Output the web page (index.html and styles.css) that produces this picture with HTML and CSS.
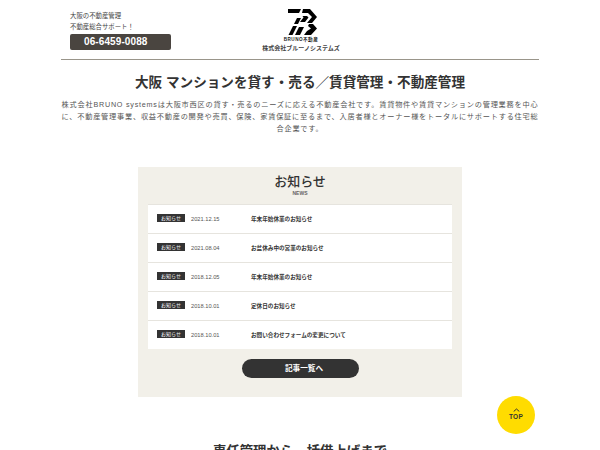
FILE: index.html
```html
<!DOCTYPE html>
<html lang="ja">
<head>
    <meta charset="UTF-8">
    <meta name="viewport" content="width=device-width, initial-scale=1.0">
    <title>株式会社ブルーノシステムズ</title>
    <link rel="stylesheet" href="styles.css">
</head>
<body>
    <header class="header">
        <div class="header-tel">
            <p class="header-lead">大阪の不動産管理<br>不動産総合サポート！</p>
            <a class="tel-box" href="#">06-6459-0088</a>
        </div>
        <a class="logo" href="#">
            <svg class="logo-mark" width="30" height="26" viewBox="0 0 30 26">
                <path d="M1 0H14L12 4H1Z"/>
                <path d="M10 9H14L11 15H7Z"/>
                <path d="M6 17H10L5.500 26H1.500Z"/>
                <path d="M16 0H23L30 8L25 14H20L25 8L21 4H15Z"/>
                <path d="M15.500 7H20L21.500 8.500L18 13H13L16.500 8.500Z"/>
                <path d="M22 15H26L30 19.500L24 26H17L20 22L24 19.500L21 17Z"/>
                <path d="M12 18H17L13 26H8Z"/>
            </svg>
            <span class="logo-brand">BRUNO不動産</span>
            <span class="logo-name">株式会社ブルーノシステムズ</span>
        </a>
    </header>

    <section class="intro">
        <h1 class="intro-title">大阪 マンションを貸す・売る／賃貸管理・不動産管理</h1>
        <p class="intro-text">株式会社BRUNO systemsは大阪市西区の貸す・売るのニーズに応える不動産会社です。賃貸物件や賃貸マンションの管理業務を中心に、不動産管理事業、収益不動産の開発や売買、保険、家賃保証に至るまで、入居者様とオーナー様をトータルにサポートする住宅総合企業です。</p>
    </section>

    <section class="news">
        <h2 class="news-title">お知らせ</h2>
        <p class="news-sub">NEWS</p>
        <ul class="news-list">
            <li class="news-item"><span class="news-tag">お知らせ</span><span class="news-date">2021.12.15</span><a class="news-link" href="#">年末年始休業のお知らせ</a></li>
            <li class="news-item"><span class="news-tag">お知らせ</span><span class="news-date">2021.08.04</span><a class="news-link" href="#">お盆休み中の営業のお知らせ</a></li>
            <li class="news-item"><span class="news-tag">お知らせ</span><span class="news-date">2018.12.05</span><a class="news-link" href="#">年末年始休業のお知らせ</a></li>
            <li class="news-item"><span class="news-tag">お知らせ</span><span class="news-date">2018.10.01</span><a class="news-link" href="#">定休日のお知らせ</a></li>
            <li class="news-item"><span class="news-tag">お知らせ</span><span class="news-date">2018.10.01</span><a class="news-link" href="#">お問い合わせフォームの変更について</a></li>
        </ul>
        <a class="news-more" href="#">記事一覧へ</a>
    </section>

    <section class="service">
        <h2 class="service-title">専任管理から一括借上げまで</h2>
    </section>

    <a class="page-top" href="#">
        <svg class="page-top-arrow" width="7" height="4" viewBox="0 0 7 4"><path d="M.7 3.5L3.5 1l2.8 2.5" fill="none" stroke="#333" stroke-width="1"/></svg>
        <span>TOP</span>
    </a>
</body>
</html>
```

FILE: styles.css
```css
* {
    margin: 0;
    padding: 0;
    box-sizing: border-box;
}

body {
    background: #fff;
    color: #333;
    font-family: "Liberation Sans", "Noto Sans CJK JP", sans-serif;
}

a {
    color: inherit;
    text-decoration: none;
}

ul {
    list-style: none;
}

.header {
    width: 478px;
    height: 60px;
    margin: 0 auto;
    padding: 11px 9px 0;
    border-bottom: 1px solid #99958a;
    display: grid;
    grid-template-columns: 1fr auto 1fr;
}

.header-lead {
    font-size: 6.4px;
    line-height: 10.5px;
    color: #444;
}

.tel-box {
    display: block;
    width: 101px;
    height: 16px;
    margin-top: 2px;
    padding-left: 14px;
    background: #4a4540;
    border-radius: 2px;
    color: #fff;
    font-size: 10px;
    font-weight: bold;
    line-height: 16px;
    letter-spacing: 0.1px;
}

.logo {
    grid-column: 2;
    display: flex;
    flex-direction: column;
    align-items: center;
    margin-top: -2px;
    transform: translateX(1px);
}

.logo-mark {
    display: block;
    margin-left: 2px;
}

.logo-brand {
    margin-top: 2px;
    font-size: 4.6px;
    line-height: 5px;
    font-weight: bold;
    letter-spacing: 0.5px;
    color: #222;
}

.logo-name {
    margin-top: 2px;
    font-size: 6px;
    line-height: 9px;
    font-weight: bold;
    color: #444;
}

.intro {
    width: 478px;
    margin: 0 auto;
    padding-top: 13px;
    text-align: center;
}

.intro-title {
    font-size: 13.6px;
    line-height: 20px;
    font-weight: bold;
    color: #333;
}

.intro-text {
    margin-top: 6px;
    font-size: 7.2px;
    line-height: 12px;
    letter-spacing: 0.77px;
    color: #555;
}

.news {
    width: 324px;
    height: 230px;
    margin: 32px auto 0;
    padding-top: 6px;
    background: #f2f0e9;
    text-align: center;
}

.news-title {
    font-size: 13px;
    line-height: 17px;
    font-weight: 500;
    color: #333;
}

.news-sub {
    font-size: 5px;
    line-height: 6px;
    font-weight: bold;
    color: #666;
}

.news-list {
    margin: 8px 10px 0;
    background: #fff;
    text-align: left;
}

.news-item {
    height: 29px;
    padding-left: 9px;
    border-top: 1px solid #e6e4de;
    display: flex;
    align-items: center;
}

.news-tag {
    width: 28px;
    height: 8px;
    margin-top: -2px;
    background: #333;
    color: #fff;
    font-size: 5px;
    line-height: 8px;
    text-align: center;
}

.news-date {
    width: 60px;
    margin-top: -1px;
    margin-left: 6px;
    font-size: 5.7px;
    color: #555;
}

.news-link {
    margin-top: -1px;
    font-size: 5.6px;
    font-weight: bold;
    color: #333;
}

.news-more {
    display: block;
    width: 117px;
    height: 19px;
    margin: 10px auto 0;
    padding-left: 8px;
    background: #333;
    border-radius: 10px;
    color: #fff;
    font-size: 7.6px;
    font-weight: bold;
    line-height: 19px;
}

.service {
    padding-top: 45px;
    padding-bottom: 40px;
    text-align: center;
}

.service-title {
    font-size: 13.4px;
    line-height: 20px;
    font-weight: bold;
    color: #333;
}

.page-top {
    position: fixed;
    left: 497px;
    top: 396px;
    width: 38px;
    height: 38px;
    background: #ffdc00;
    border-radius: 50%;
    display: flex;
    flex-direction: column;
    align-items: center;
    padding-top: 12px;
    color: #333;
    font-size: 6.5px;
    line-height: 8px;
    font-weight: bold;
    letter-spacing: 0.3px;
}

.page-top-arrow {
    display: block;
    margin-bottom: 1px;
}
```
